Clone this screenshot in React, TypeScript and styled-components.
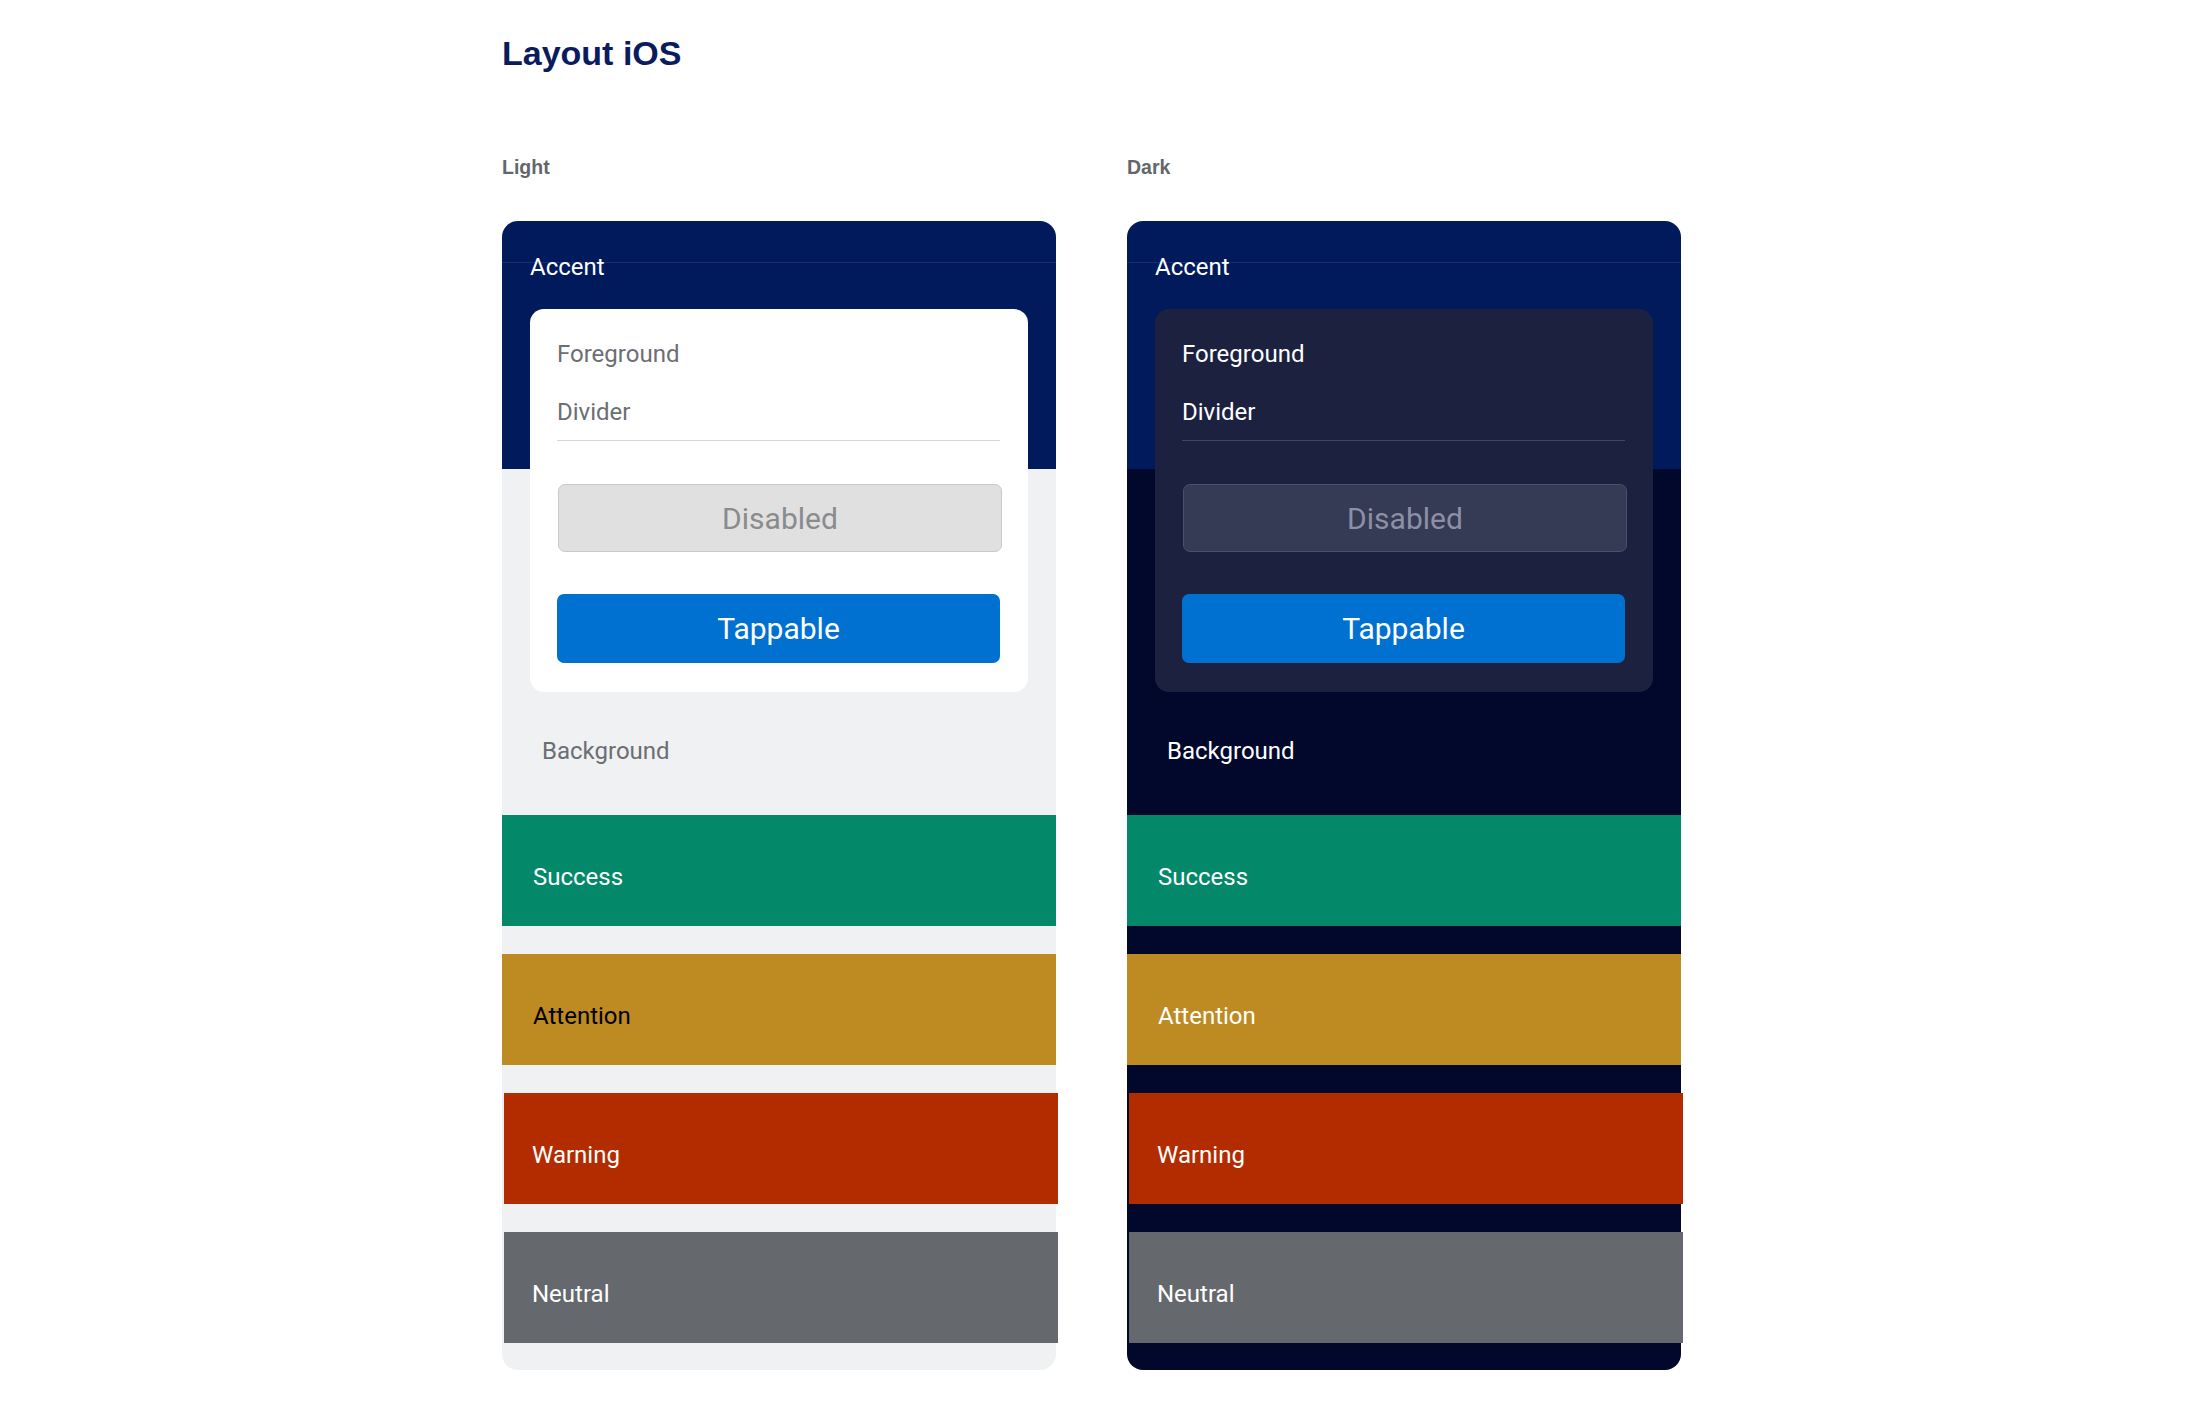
import React from "react";
import styled, { createGlobalStyle } from "styled-components";

type Mode = "light" | "dark";

interface Palette {
  accent: string;
  background: string;
  card: string;
  text: string;
  divider: string;
  disabledBg: string;
  disabledBorder: string;
  disabledText: string;
  attentionText: string;
}

const palettes: Record<Mode, Palette> = {
  light: {
    accent: "#001a5b",
    background: "#f0f1f3",
    card: "#ffffff",
    text: "#6b6e73",
    divider: "#d5d6d9",
    disabledBg: "#e0e0e0",
    disabledBorder: "#c9c9cb",
    disabledText: "#8b8b8d",
    attentionText: "#000000",
  },
  dark: {
    accent: "#001a5b",
    background: "#01082c",
    card: "#1b213f",
    text: "#ffffff",
    divider: "#3e4462",
    disabledBg: "#353a55",
    disabledBorder: "#4a4f6c",
    disabledText: "#8c90a4",
    attentionText: "#ffffff",
  },
};

const bands = [
  { name: "Success", color: "#03886a", shift: false },
  { name: "Attention", color: "#bd8b21", shift: false },
  { name: "Warning", color: "#b32c00", shift: true },
  { name: "Neutral", color: "#65686d", shift: true },
];

const GlobalStyle = createGlobalStyle`
  body {
    margin: 0;
    background: #ffffff;
    font-family: Roboto, "Liberation Sans", Arial, sans-serif;
  }
`;

const Page = styled.div`
  padding: 33px 0 40px 502px;
`;

const Title = styled.h1`
  margin: 0;
  font-family: "Liberation Sans", Arial, sans-serif;
  font-size: 34px;
  line-height: 40px;
  font-weight: 700;
  color: #0b1c5e;
`;

const Columns = styled.div`
  display: grid;
  grid-template-columns: repeat(2, 554px);
  column-gap: 71px;
  margin-top: 82px;
`;

const Column = styled.section`
  display: flex;
  flex-direction: column;
`;

const ModeLabel = styled.h2`
  margin: 0 0 42px;
  font-family: "Liberation Sans", Arial, sans-serif;
  font-size: 19.5px;
  line-height: 24px;
  font-weight: 700;
  color: #63666b;
`;

const Panel = styled.div<{ $p: Palette }>`
  display: flex;
  flex-direction: column;
  border-radius: 16px;
  padding-bottom: 27px;
  background: linear-gradient(
    to bottom,
    ${(p) => p.$p.accent} 0,
    ${(p) => p.$p.accent} 248px,
    ${(p) => p.$p.background} 248px
  );
`;

const AccentRow = styled.div`
  padding: 32px 28px 0;
  font-size: 24px;
  line-height: 28px;
  color: #ffffff;
  background: linear-gradient(rgba(255, 255, 255, 0.09), rgba(255, 255, 255, 0.09))
    no-repeat 0 41px / 100% 1px;
`;

const Card = styled.div<{ $p: Palette }>`
  display: flex;
  flex-direction: column;
  margin: 28px 28px 0;
  padding: 31px 28px 29px 27px;
  border-radius: 14px;
  background: ${(p) => p.$p.card};
`;

const FieldLabel = styled.div<{ $p: Palette; $divider?: boolean }>`
  font-size: 24px;
  line-height: 28px;
  color: ${(p) => p.$p.text};
  margin-bottom: ${(p) => (p.$divider ? "0" : "30px")};
  padding-bottom: ${(p) => (p.$divider ? "14px" : "0")};
  border-bottom: ${(p) => (p.$divider ? `1px solid ${p.$p.divider}` : "none")};
`;

const Button = styled.button`
  display: flex;
  align-items: center;
  justify-content: center;
  box-sizing: border-box;
  font-family: Roboto, "Liberation Sans", Arial, sans-serif;
  font-size: 30px;
  border-radius: 7px;
  padding: 0;
`;

const DisabledButton = styled(Button)<{ $p: Palette }>`
  height: 68px;
  margin: 43px -2px 0 1px;
  background: ${(p) => p.$p.disabledBg};
  border: 1px solid ${(p) => p.$p.disabledBorder};
  color: ${(p) => p.$p.disabledText};
`;

const TapButton = styled(Button)`
  height: 69px;
  margin-top: 42px;
  background: #0070d1;
  border: none;
  color: #ffffff;
`;

const BackgroundLabel = styled.div<{ $p: Palette }>`
  margin-top: 45px;
  padding-left: 40px;
  font-size: 24px;
  line-height: 28px;
  color: ${(p) => p.$p.text};
`;

const BandList = styled.div`
  display: flex;
  flex-direction: column;
  gap: 28px;
  margin-top: 50px;
`;

const Band = styled.div<{ $color: string; $text: string; $shift: boolean }>`
  box-sizing: border-box;
  height: 111px;
  padding: 48px 30px 0 ${(p) => (p.$shift ? "28px" : "31px")};
  font-size: 24px;
  line-height: 28px;
  background: ${(p) => p.$color};
  color: ${(p) => p.$text};
  margin: ${(p) => (p.$shift ? "0 -2px 0 2px" : "0")};
`;

const ModePanel = ({ mode }: { mode: Mode }) => {
  const p = palettes[mode];
  return (
    <Column>
      <ModeLabel>{mode === "light" ? "Light" : "Dark"}</ModeLabel>
      <Panel $p={p}>
        <AccentRow>Accent</AccentRow>
        <Card $p={p}>
          <FieldLabel $p={p}>Foreground</FieldLabel>
          <FieldLabel $p={p} $divider>
            Divider
          </FieldLabel>
          <DisabledButton $p={p} disabled>
            Disabled
          </DisabledButton>
          <TapButton>Tappable</TapButton>
        </Card>
        <BackgroundLabel $p={p}>Background</BackgroundLabel>
        <BandList>
          {bands.map((b) => (
            <Band
              key={b.name}
              $color={b.color}
              $shift={b.shift}
              $text={b.name === "Attention" ? p.attentionText : "#ffffff"}
            >
              {b.name}
            </Band>
          ))}
        </BandList>
      </Panel>
    </Column>
  );
};

const App = () => {
  return (
    <>
      <GlobalStyle />
      <Page>
        <Title>Layout iOS</Title>
        <Columns>
          <ModePanel mode="light" />
          <ModePanel mode="dark" />
        </Columns>
      </Page>
    </>
  );
};

export default App;
